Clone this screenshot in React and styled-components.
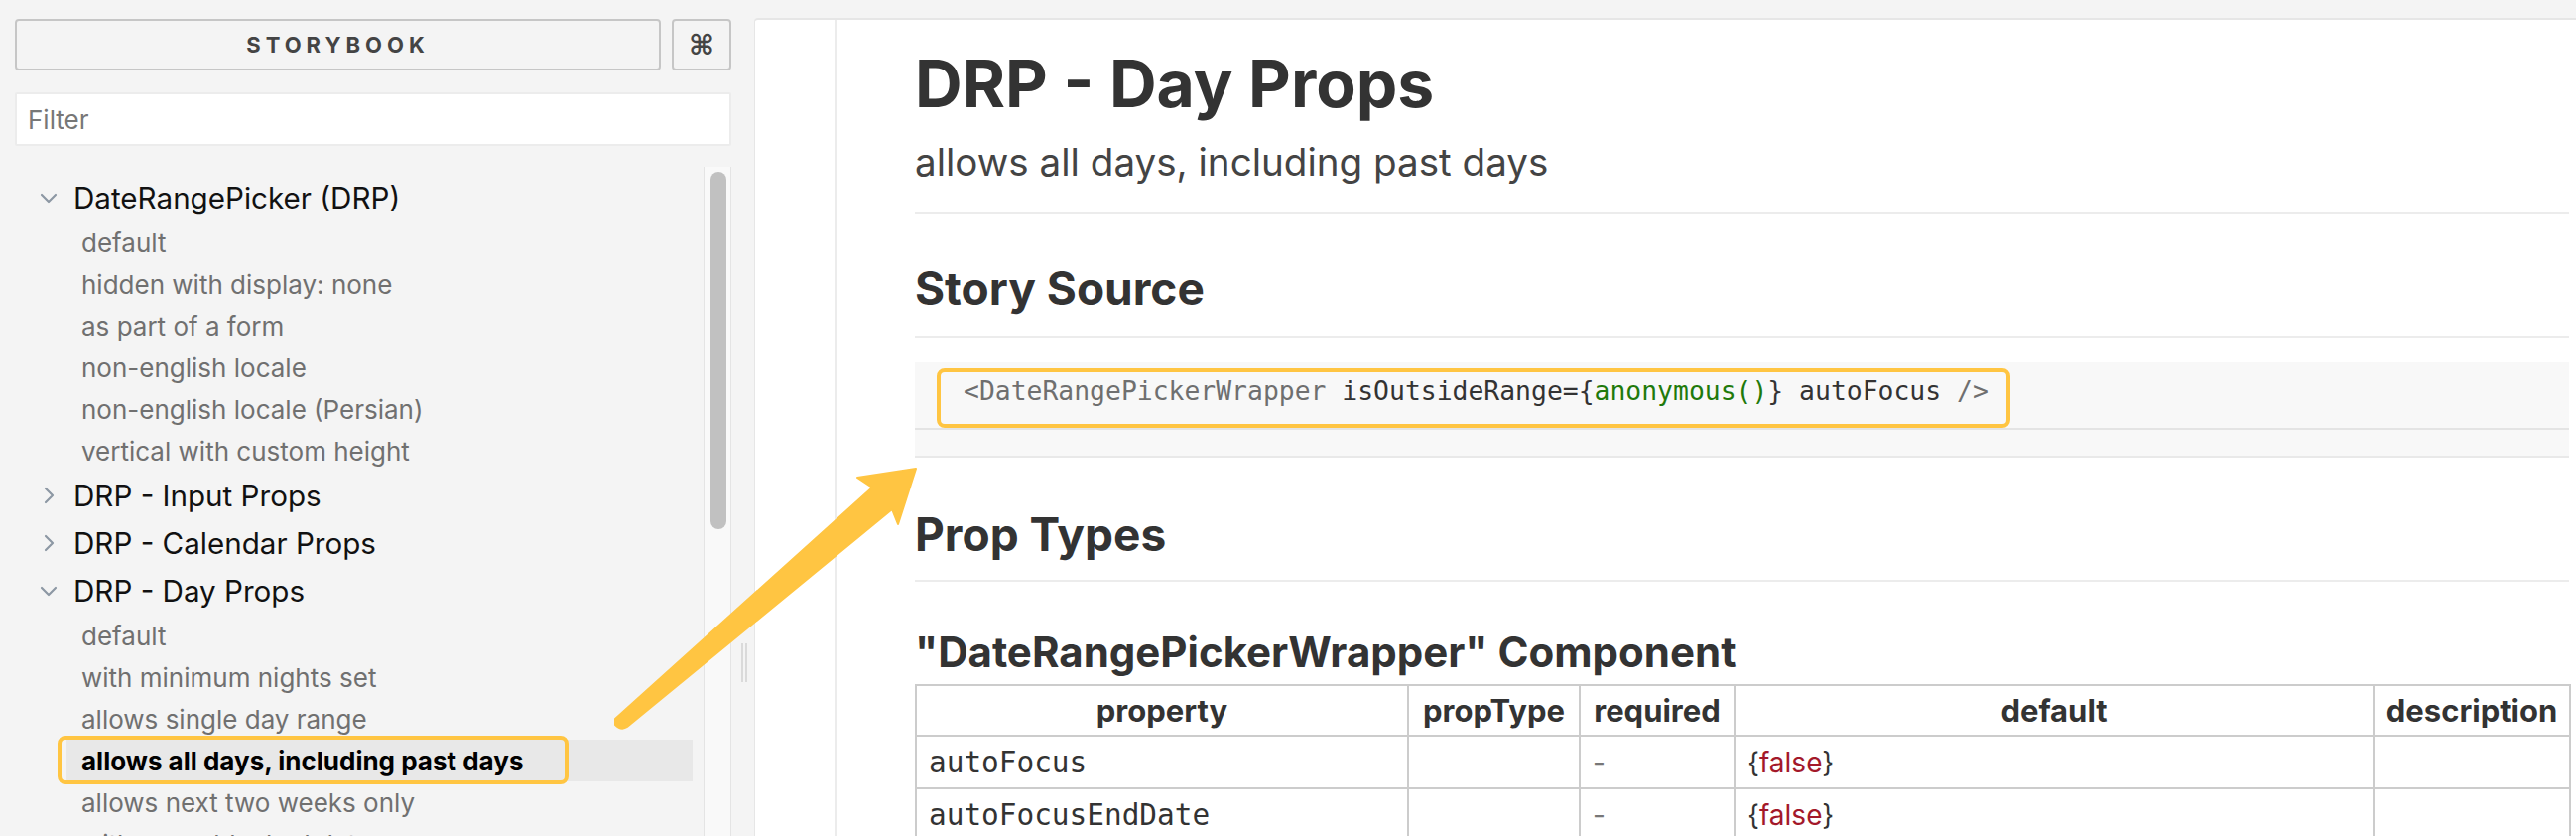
import React from 'react';
import styled, { createGlobalStyle } from 'styled-components';

const GlobalStyle = createGlobalStyle`
  html, body { margin: 0; padding: 0; }
  body { background: #f4f4f4; font-family: Inter, "Noto Sans", sans-serif; }
  * { box-sizing: border-box; }
  table { font-size: inherit; }
`;

const ORANGE = '#ffc542';

const Page = styled.div`
  position: relative;
  display: flex;
  width: 2596px;
  height: 842px;
  overflow: hidden;
  background: #f4f4f4;
`;

const Sidebar = styled.aside`
  flex: none;
  width: 737px;
  padding: 19px 0 0 15px;
  display: flex;
  flex-direction: column;
`;

const TopRow = styled.div`
  display: flex;
  gap: 11px;
  height: 52px;
`;

const HeaderButton = styled.button`
  flex: ${p => (p.$grow ? 1 : 'none')};
  width: ${p => (p.$grow ? 'auto' : '60px')};
  display: flex;
  align-items: center;
  justify-content: center;
  background: transparent;
  border: 2px solid #c6c6c6;
  border-radius: 4px;
  color: #444;
  font-family: ${p => (p.$grow ? 'Inter, sans-serif' : '"DejaVu Sans", sans-serif')};
  font-weight: 700;
  font-size: ${p => (p.$grow ? '22px' : '28px')};
  letter-spacing: ${p => (p.$grow ? '5px' : '0')};
  padding: 0;
`;

const FilterInput = styled.input`
  margin-top: 22px;
  height: 54px;
  width: 100%;
  border: 2px solid #ececec;
  border-radius: 2px;
  background: #fff;
  padding: 0 0 0 11px;
  font-family: Inter, sans-serif;
  font-size: 26px;
  color: #333;
  outline: none;
  &::placeholder { color: #777; }
`;

const TreeArea = styled.div`
  margin-top: 21px;
  flex: 1;
  display: flex;
  min-height: 0;
`;

const TreeList = styled.div`
  flex: 1;
  padding-top: 7px;
  overflow: hidden;
`;

const ScrollTrack = styled.div`
  flex: none;
  width: 28px;
  border-left: 1px solid #e4e4e4;
  border-right: 1px solid #e4e4e4;
  background: #f9f9f9;
  padding: 5px 0 0 6px;
`;

const ScrollThumb = styled.div`
  width: 16px;
  height: 360px;
  border-radius: 8px;
  background: #c1c1c1;
`;

const GroupRow = styled.div`
  height: 48px;
  display: flex;
  align-items: center;
  padding-left: ${p => (p.$open ? 25 : 28)}px;
  gap: ${p => (p.$open ? 16 : 19)}px;
  font-size: 29.6px;
  color: #111;
`;

const StoryRow = styled.div`
  position: relative;
  height: 42px;
  margin: 0 11px 0 52px;
  padding-left: 15px;
  display: flex;
  align-items: center;
  font-size: 26px;
  font-weight: ${p => (p.$active ? 700 : 400)};
  color: ${p => (p.$active ? '#000' : '#707070')};
  background: ${p => (p.$active ? '#e8e8e8' : 'transparent')};
  white-space: nowrap;
`;

const SideFrame = styled.span`
  position: absolute;
  left: -9px;
  top: -4px;
  width: 515px;
  height: 49px;
  border: 4px solid ${ORANGE};
  border-radius: 8px;
  pointer-events: none;
`;

const Resizer = styled.div`
  flex: none;
  width: 23px;
  padding: 648px 0 0 10px;
  display: flex;
  gap: 2px;
  align-items: flex-start;
`;

const Grip = styled.span`
  width: 2px;
  height: 39px;
  background: #dadada;
`;

const Preview = styled.main`
  flex: 1;
  margin-top: 18px;
  background: #fff;
  border-top: 2px solid #e6e6e6;
  border-left: 1px solid #e6e6e6;
  border-top-left-radius: 4px;
  display: flex;
  min-width: 0;
`;

const Gutter = styled.div`
  flex: none;
  width: 82px;
  border-right: 2px solid #ececec;
`;

const Content = styled.div`
  flex: 1;
  min-width: 0;
  padding: 0 7px 0 79px;
  color: #333;
`;

const Title = styled.h1`
  margin: 24px 0 0;
  font-size: 66px;
  line-height: 80px;
  font-weight: 700;
  color: #333;
`;

const Subtitle = styled.h2`
  margin: 17px 0 0;
  font-size: 38.6px;
  line-height: 44px;
  font-weight: 400;
  color: #444;
`;

const Rule = styled.hr`
  margin: ${p => p.$gap}px 0 0;
  border: 0;
  height: 2px;
  background: #ececec;
`;

const SectionTitle = styled.h2`
  margin: ${p => p.$gap}px 0 0;
  font-size: 46px;
  line-height: 56px;
  font-weight: 700;
  color: #333;
`;

const ComponentTitle = styled.h3`
  margin: 46.7px 0 0;
  font-size: 42px;
  line-height: 48px;
  font-weight: 700;
  color: #333;
`;

const CodeBlock = styled.div`
  margin-top: 25px;
  background: #f8f8f8;
`;

const Pre = styled.pre`
  margin: 0;
  height: 68px;
  padding: 6px 0 0 22px;
  border-bottom: 2px solid #e4e4e4;
  font-family: "DejaVu Sans Mono", "Liberation Mono", monospace;
  font-size: 26.4px;
  color: #333;
`;

const CodeFrame = styled.span`
  display: inline-block;
  height: 60px;
  padding: 0 18px 14px 23px;
  line-height: 38px;
  border: 4px solid ${ORANGE};
  border-radius: 8px;
`;

const Tok = styled.span`
  color: ${p => p.$c};
`;

const ScrollStrip = styled.div`
  height: 28px;
  border-bottom: 2px solid #e9e9e9;
`;

const Table = styled.table`
  margin-top: 8.5px;
  width: 1667px;
  border-collapse: collapse;
  table-layout: fixed;
  font-family: Inter, sans-serif;
`;

const Th = styled.th`
  height: 51px;
  padding: 0;
  border: 2px solid #cccccc;
  font-size: 31px;
  font-weight: 700;
  color: #333;
  text-align: center;
  white-space: nowrap;
`;

const Td = styled.td`
  height: 53px;
  padding: 0 0 0 12px;
  border: 2px solid #cccccc;
  font-family: Inter, sans-serif;
  font-size: 28px;
  color: ${p => (p.$muted ? '#777' : '#333')};
  white-space: nowrap;
`;

const PropName = styled.span`
  font-family: "DejaVu Sans Mono", "Liberation Mono", monospace;
  font-size: 29.4px;
  color: #333;
`;

const Falsy = styled.span`
  color: #a3182a;
`;

const ArrowLayer = styled.svg`
  position: absolute;
  left: 0;
  top: 0;
  z-index: 5;
  pointer-events: none;
`;

const Chevron = ({ open }) => (
  <svg width={open ? 18 : 12} height={open ? 12 : 18} viewBox={open ? '0 0 18 12' : '0 0 12 18'} fill="none" stroke="#8d98a4" strokeWidth="2.2" strokeLinecap="round" strokeLinejoin="round">
    {open ? <polyline points="2,3 9,10 16,3" /> : <polyline points="3,2 10,9 3,16" />}
  </svg>
);

const groups = [
  {
    name: 'DateRangePicker (DRP)',
    open: true,
    stories: ['default', 'hidden with display: none', 'as part of a form', 'non-english locale', 'non-english locale (Persian)', 'vertical with custom height'],
  },
  { name: 'DRP - Input Props', open: false, stories: [] },
  { name: 'DRP - Calendar Props', open: false, stories: [] },
  {
    name: 'DRP - Day Props',
    open: true,
    stories: ['default', 'with minimum nights set', 'allows single day range', 'allows all days, including past days', 'allows next two weeks only', 'with some blocked dates'],
  },
];

const ACTIVE = 'allows all days, including past days';

const props = [
  { name: 'autoFocus', type: '', required: '-', def: 'false' },
  { name: 'autoFocusEndDate', type: '', required: '-', def: 'false' },
];

export default function App() {
  return (
    <>
      <GlobalStyle />
      <Page>
        <Sidebar>
          <TopRow>
            <HeaderButton $grow>STORYBOOK</HeaderButton>
            <HeaderButton>⌘</HeaderButton>
          </TopRow>
          <FilterInput placeholder="Filter" />
          <TreeArea>
            <TreeList>
              {groups.map(g => (
                <div key={g.name}>
                  <GroupRow $open={g.open}>
                    <Chevron open={g.open} />
                    <span>{g.name}</span>
                  </GroupRow>
                  {g.stories.map(s => {
                    const active = g.name === 'DRP - Day Props' && s === ACTIVE;
                    return (
                      <StoryRow key={s} $active={active}>
                        {s}
                        {active && <SideFrame />}
                      </StoryRow>
                    );
                  })}
                </div>
              ))}
            </TreeList>
            <ScrollTrack>
              <ScrollThumb />
            </ScrollTrack>
          </TreeArea>
        </Sidebar>
        <Resizer>
          <Grip />
          <Grip />
        </Resizer>
        <Preview>
          <Gutter />
          <Content>
            <Title>DRP - Day Props</Title>
            <Subtitle>allows all days, including past days</Subtitle>
            <Rule $gap={29} />
            <SectionTitle $gap={46}>Story Source</SectionTitle>
            <Rule $gap={20} />
            <CodeBlock>
              <Pre>
                <CodeFrame>
                  <Tok $c="#6f6f6f">&lt;DateRangePickerWrapper</Tok>{' '}
                  <Tok $c="#333">isOutsideRange=</Tok>
                  <Tok $c="#333">{'{'}</Tok>
                  <Tok $c="#1f7a0b">anonymous()</Tok>
                  <Tok $c="#333">{'}'}</Tok>{' '}
                  <Tok $c="#333">autoFocus</Tok>{' '}
                  <Tok $c="#6f6f6f">/&gt;</Tok>
                </CodeFrame>
              </Pre>
              <ScrollStrip />
            </CodeBlock>
            <SectionTitle $gap={49}>Prop Types</SectionTitle>
            <Rule $gap={18} />
            <ComponentTitle>"DateRangePickerWrapper" Component</ComponentTitle>
            <Table>
              <colgroup>
                <col style={{ width: 496 }} />
                <col style={{ width: 173 }} />
                <col style={{ width: 156 }} />
                <col style={{ width: 644 }} />
                <col style={{ width: 198 }} />
              </colgroup>
              <thead>
                <tr>
                  <Th>property</Th>
                  <Th>propType</Th>
                  <Th>required</Th>
                  <Th>default</Th>
                  <Th>description</Th>
                </tr>
              </thead>
              <tbody>
                {props.map(p => (
                  <tr key={p.name}>
                    <Td>
                      <PropName>{p.name}</PropName>
                    </Td>
                    <Td>{p.type}</Td>
                    <Td $muted>{p.required}</Td>
                    <Td>
                      {'{'}<Falsy>{p.def}</Falsy>{'}'}
                    </Td>
                    <Td />
                  </tr>
                ))}
              </tbody>
            </Table>
          </Content>
        </Preview>
        <ArrowLayer width="2596" height="842" viewBox="0 0 2596 842">
          <path
            d="M 620 724 L 879 491 L 864 481 L 923 472 L 905 528 L 899 513 L 632 732 Q 626 736 620 730 Z"
            fill={ORANGE}
            stroke={ORANGE}
            strokeWidth="2"
            strokeLinejoin="round"
          />
        </ArrowLayer>
      </Page>
    </>
  );
}
